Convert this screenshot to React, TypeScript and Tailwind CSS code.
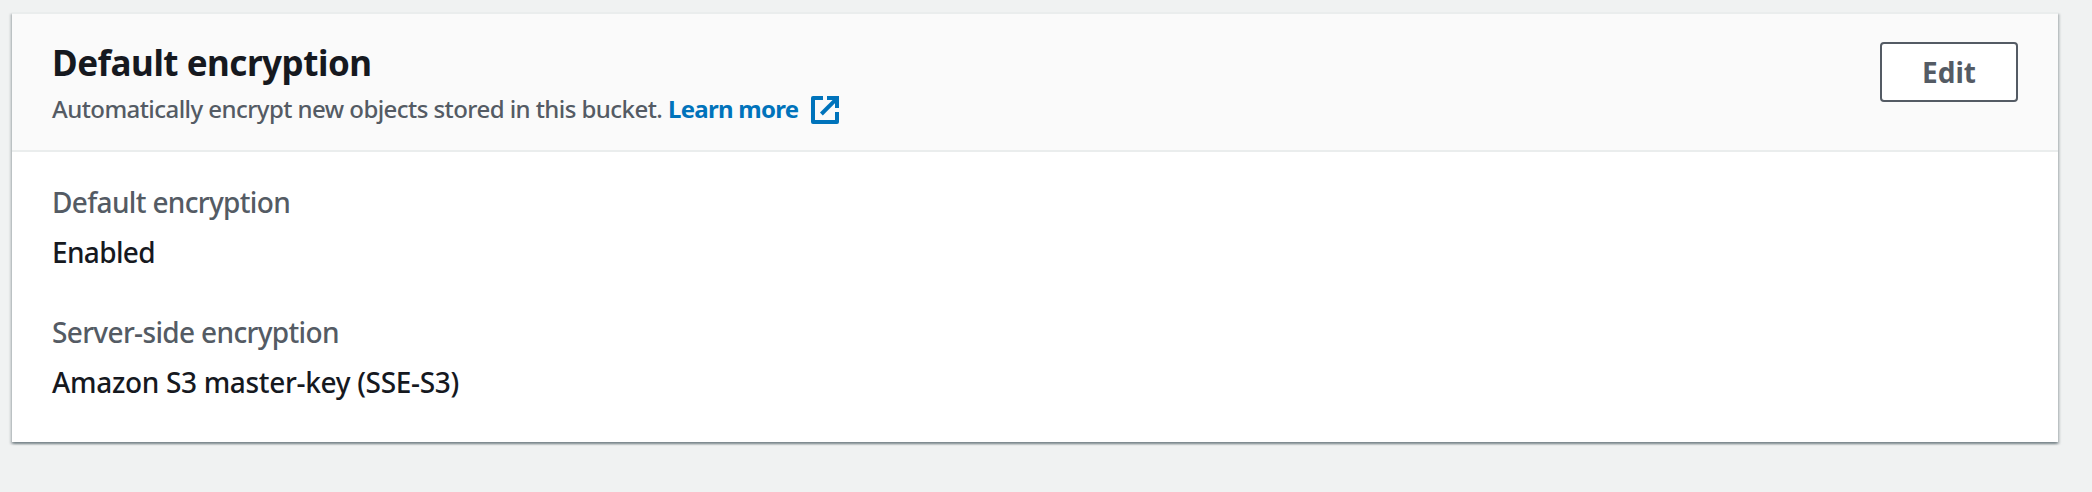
import React from "react";

function ExternalIcon() {
  return (
    <svg viewBox="0 0 16 16" className="mt-0.5 ml-[11px] size-8 shrink-0" fill="none" stroke="#0073bb" strokeWidth="2" strokeLinejoin="round">
      <path d="M7 2H2v12h12V9" />
      <path d="M9 2h5v5" strokeLinejoin="miter" />
      <path d="M6.2 10L14 2.2" />
    </svg>
  );
}

function Field({ label, value, valueClass, labelClass }: { label: string; value: string; valueClass: string; labelClass: string }) {
  return (
    <div className="flex flex-col items-start gap-[10px] text-[28px] leading-[40px] font-medium">
      <dt className={`text-[#545b64] ${labelClass}`}>{label}</dt>
      <dd className={`text-[#16191f] ${valueClass}`}>{value}</dd>
    </div>
  );
}

export default function App() {
  return (
    <div className="h-[492px] bg-[#f0f2f2] pt-3 pr-[34px] pl-3 font-['Noto_Sans',sans-serif]">
      <section className="h-[430px] border-t-2 border-[#eaeded] bg-white shadow-[0_2px_2px_0_rgba(0,28,36,0.3),2px_2px_2px_0_rgba(0,28,36,0.15),-2px_2px_2px_0_rgba(0,28,36,0.15)]">
        <header className="flex h-[138px] items-start justify-between border-b-2 border-[#eaeded] bg-[#fafafa] pr-10 pl-10">
          <div className="pt-[26px]">
            <h2 className="text-[35px] leading-[45px] font-bold tracking-[-0.48px] text-[#16191f]">Default encryption</h2>
            <div className="flex h-[48px] items-center text-[24px] leading-[36px] whitespace-pre">
              <span className="font-medium tracking-[-0.56px] text-[#545b64]">Automatically encrypt new objects stored in this bucket. </span>
              <a href="#" className="flex items-center font-bold text-[#0073bb]">
                <span className="tracking-[-0.72px]">Learn more</span>
                <ExternalIcon />
              </a>
            </div>
          </div>
          <button className="mt-[28px] flex h-[60px] w-[138px] items-center justify-center rounded-[4px] border-2 border-[#545b64] bg-white text-[28px] leading-[40px] font-bold text-[#545b64]">
            Edit
          </button>
        </header>
        <dl className="flex flex-col gap-10 px-10 pt-[30px]">
          <Field label="Default encryption" value="Enabled" labelClass="tracking-[-0.66px]" valueClass="tracking-[-0.65px]" />
          <Field label="Server-side encryption" value="Amazon S3 master-key (SSE-S3)" labelClass="tracking-[-0.65px]" valueClass="tracking-[-0.32px]" />
        </dl>
      </section>
    </div>
  );
}
